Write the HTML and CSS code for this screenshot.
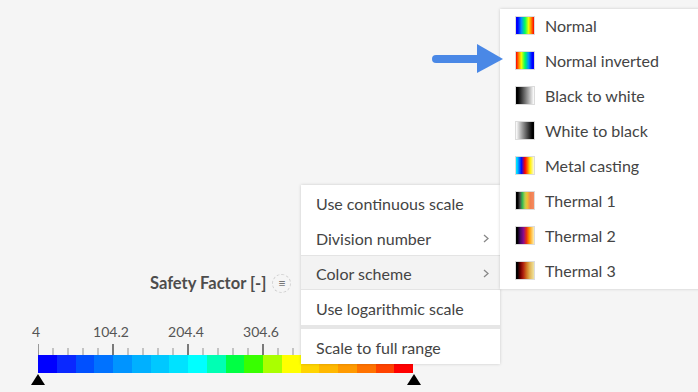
FILE: index.html
```html
<!DOCTYPE html>
<html lang="en">

<head>
    <meta charset="UTF-8">
    <meta name="viewport" content="width=device-width, initial-scale=1.0">
    <title>Color Scheme</title>
    <link rel="stylesheet" href="styles.css">
</head>

<body>
    <div class="screen">
        <div class="legend">
            <div class="legend-title">
                <span>Safety Factor [-]</span>
                <span class="legend-btn">&#8801;</span>
            </div>
            <div class="scale-labels">
                <span class="label">4</span>
                <span class="label">104.2</span>
                <span class="label">204.4</span>
                <span class="label">304.6</span>
            </div>
            <div class="ticks">
                <span class="tick first"></span>
                <span class="tick"></span><span class="tick"></span><span class="tick"></span><span class="tick"></span>
                <span class="tick major"></span>
                <span class="tick"></span><span class="tick"></span><span class="tick"></span><span class="tick"></span>
                <span class="tick major"></span>
                <span class="tick"></span><span class="tick"></span><span class="tick"></span><span class="tick"></span>
                <span class="tick major"></span>
                <span class="tick"></span><span class="tick"></span><span class="tick"></span><span class="tick"></span>
                <span class="tick major"></span>
                <span class="tick"></span><span class="tick"></span><span class="tick"></span><span class="tick"></span>
                <span class="tick major"></span>
            </div>
            <div class="bar">
                <span class="seg" style="background:#0000ff"></span>
                <span class="seg" style="background:#0a28ff"></span>
                <span class="seg" style="background:#0050ff"></span>
                <span class="seg" style="background:#0072ff"></span>
                <span class="seg" style="background:#0094ff"></span>
                <span class="seg" style="background:#00b0ff"></span>
                <span class="seg" style="background:#00c8ff"></span>
                <span class="seg" style="background:#00e2ff"></span>
                <span class="seg" style="background:#00ffff"></span>
                <span class="seg" style="background:#00ffb4"></span>
                <span class="seg" style="background:#00ff44"></span>
                <span class="seg" style="background:#38ff00"></span>
                <span class="seg" style="background:#aaff00"></span>
                <span class="seg" style="background:#ffff00"></span>
                <span class="seg" style="background:#ffd400"></span>
                <span class="seg" style="background:#ffb800"></span>
                <span class="seg" style="background:#ff9a00"></span>
                <span class="seg" style="background:#ff7200"></span>
                <span class="seg" style="background:#ff4200"></span>
                <span class="seg" style="background:#ff0000"></span>
            </div>
            <div class="handles">
                <span class="handle"></span>
                <span class="handle"></span>
            </div>
        </div>

        <div class="context-menu">
            <div class="menu-item">Use continuous scale</div>
            <div class="menu-item">Division number
                <svg class="chevron" width="6" height="9" viewBox="0 0 6 9"><polyline points="1,1 5,4.5 1,8" fill="none" stroke="#888" stroke-width="1.3"/></svg>
            </div>
            <div class="menu-item active">Color scheme
                <svg class="chevron" width="6" height="9" viewBox="0 0 6 9"><polyline points="1,1 5,4.5 1,8" fill="none" stroke="#888" stroke-width="1.3"/></svg>
            </div>
            <div class="menu-item">Use logarithmic scale</div>
            <div class="menu-sep"></div>
            <div class="menu-item">Scale to full range</div>
        </div>

        <div class="submenu">
            <div class="sub-item"><span class="swatch normal"></span>Normal</div>
            <div class="sub-item"><span class="swatch inverted"></span>Normal inverted</div>
            <div class="sub-item"><span class="swatch black-white"></span>Black to white</div>
            <div class="sub-item"><span class="swatch white-black"></span>White to black</div>
            <div class="sub-item"><span class="swatch metal"></span>Metal casting</div>
            <div class="sub-item"><span class="swatch thermal1"></span>Thermal 1</div>
            <div class="sub-item"><span class="swatch thermal2"></span>Thermal 2</div>
            <div class="sub-item"><span class="swatch thermal3"></span>Thermal 3</div>
        </div>

        <svg class="pointer" width="80" height="40" viewBox="0 0 80 40">
            <line x1="8" y1="19" x2="52" y2="19" stroke="#4a88e6" stroke-width="8" stroke-linecap="round"/>
            <polygon points="49,4 75,19 49,33" fill="#4a88e6"/>
        </svg>
    </div>
</body>

</html>
```

FILE: styles.css
```css
body {
    margin: 0;
    background-color: #f5f5f5;
    font-family: Lato, "Open Sans", sans-serif;
    color: #444;
}

.screen {
    position: relative;
    width: 698px;
    height: 392px;
    overflow: hidden;
    display: flex;
    flex-direction: column;
    justify-content: flex-end;
}

.legend {
    padding: 0 0 7px 38px;
}

.legend-title {
    display: flex;
    align-items: center;
    margin-left: 112px;
    height: 20px;
    font-size: 16.5px;
    font-weight: bold;
    color: #4d4d4d;
}

.legend-btn {
    width: 17px;
    height: 17px;
    margin-left: 6px;
    border: 1px dashed #d0d0d0;
    border-radius: 50%;
    display: flex;
    align-items: center;
    justify-content: center;
    font-size: 13px;
    font-weight: normal;
    color: #777;
}

.scale-labels {
    display: flex;
    margin: 31px 0 0 -39.5px;
    height: 16px;
    line-height: 16px;
    font-size: 14px;
    color: #555;
}

.label {
    flex: 0 0 75px;
    text-align: center;
}

.ticks {
    display: flex;
    align-items: flex-end;
    height: 11px;
    margin: 4px 0 0 -1px;
}

.tick {
    flex: 0 0 15px;
    box-sizing: border-box;
    height: 7px;
    border-left: 2px solid #c4c4c4;
}

.tick.major {
    height: 11px;
    border-left-color: #7a7a7a;
}

.tick.first {
    height: 11px;
    margin-left: 1px;
    flex-basis: 14px;
    border-left: 1px solid #999;
}

.bar {
    display: flex;
    width: 375px;
    height: 18px;
}

.seg {
    flex: 1;
}

.handles {
    display: flex;
    justify-content: space-between;
    width: 390px;
    margin: 1px 0 0 -7.5px;
}

.handle {
    width: 0;
    height: 0;
    border-left: 7.5px solid transparent;
    border-right: 7.5px solid transparent;
    border-bottom: 11px solid #000;
}

.context-menu {
    position: absolute;
    left: 301px;
    top: 185px;
    width: 199px;
    background: #fff;
    box-shadow: 0 0 3px rgba(0, 0, 0, 0.18);
    font-size: 16px;
}

.menu-item {
    height: 35px;
    box-sizing: border-box;
    display: flex;
    align-items: center;
    justify-content: space-between;
    padding: 2px 11px 0 15px;
}

.menu-item.active {
    background: #f3f3f3;
    border-top: 1px solid #e4e4e4;
    border-bottom: 1px solid #e4e4e4;
}

.menu-sep {
    height: 4px;
    background: #e6e6e6;
}

.submenu {
    position: absolute;
    left: 500px;
    top: 9px;
    width: 230px;
    height: 280px;
    background: #fff;
    box-shadow: 0 0 3px rgba(0, 0, 0, 0.18);
    font-size: 16px;
}

.sub-item {
    height: 35px;
    box-sizing: border-box;
    display: flex;
    align-items: center;
    gap: 10px;
    padding: 0 0 2px 15px;
}

.swatch {
    width: 20px;
    height: 19px;
    box-sizing: border-box;
    border: 1px solid #dcdcdc;
}

.normal {
    background: linear-gradient(to right, #0000ff 10%, #0090ff 30%, #00ff60 50%, #f0ff00 70%, #ff8000 85%, #ff0000);
}

.inverted {
    background: linear-gradient(to left, #0000ff 10%, #0090ff 30%, #00ff60 50%, #f0ff00 70%, #ff8000 85%, #ff0000);
}

.black-white {
    background: linear-gradient(to right, #000 10%, #fff);
}

.white-black {
    background: linear-gradient(to left, #000 10%, #fff);
}

.metal {
    background: linear-gradient(to right, #00e0ff 5%, #0010ff 30%, #ff0000 50%, #ff6000 62%, #ffee00 78%, #fffbe0);
}

.thermal1 {
    background: linear-gradient(to right, #000 10%, #4a4a4a 22%, #30b850 35%, #b8d050 50%, #f0c030 62%, #f08050 80%, #f58a60);
}

.thermal2 {
    background: linear-gradient(to right, #000 8%, #4a0a6a 25%, #8c0a8c 42%, #e83010 58%, #ff9a00 75%, #fff0b0);
}

.thermal3 {
    background: linear-gradient(to right, #000 8%, #700000 25%, #b02010 40%, #d07020 58%, #e0b050 75%, #f0e4a0);
}

.pointer {
    position: absolute;
    left: 428px;
    top: 40px;
}
```
